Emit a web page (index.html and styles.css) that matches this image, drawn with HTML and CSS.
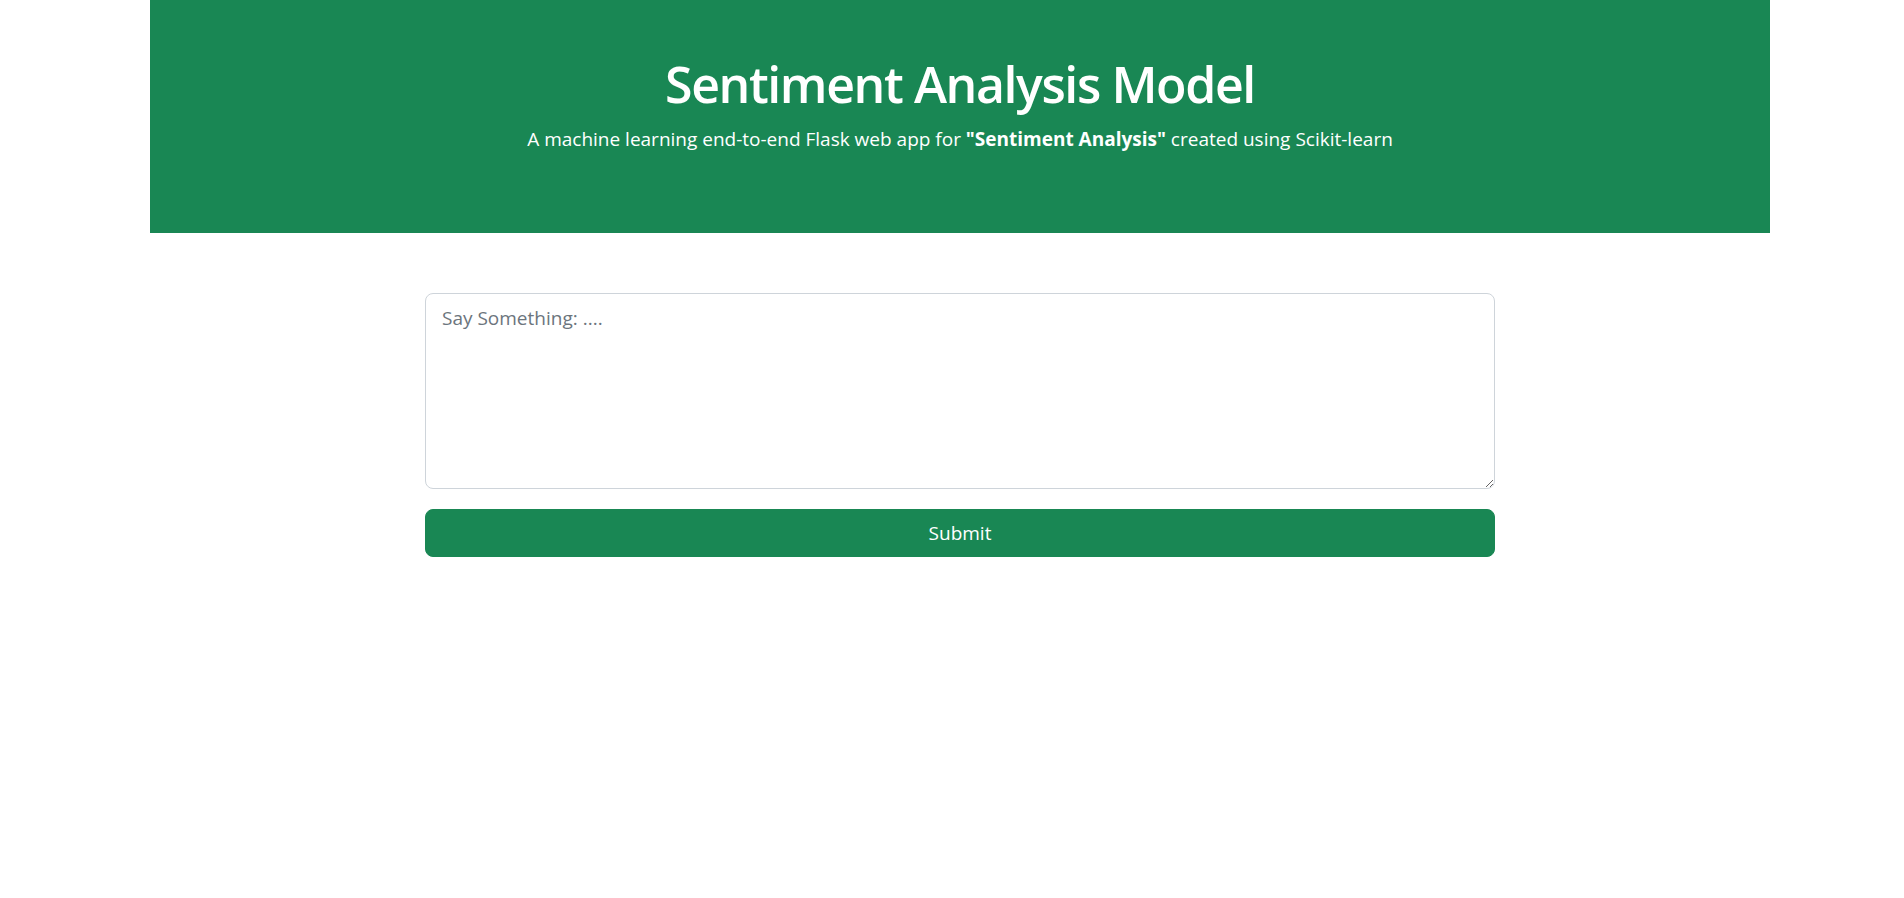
FILE: index.html
```html
<!DOCTYPE html>
<html lang="en">
<head>
  <meta charset="UTF-8">
  <meta name="viewport" content="width=device-width, initial-scale=1.0">
  <title>Sentiment Analysis</title>
  <link rel="stylesheet" href="styles.css">
</head>
<body>

<header class="hero">
  <h1 class="hero-title">Sentiment Analysis Model</h1>
  <p class="hero-lead">A machine learning end-to-end Flask web app for <b>"Sentiment Analysis"</b> created using Scikit-learn</p>
</header>

<section class="main">
  <form class="predict-form" action="/predict" method="post">
    <textarea class="form-input" name="message" placeholder="Say Something: ...."></textarea>
    <input class="btn-submit" type="submit" value="Submit">
  </form>
</section>

</body>
</html>
```

FILE: styles.css
```css
  body {
    font-family: "Open Sans", "Noto Sans", sans-serif;
    margin: 0;
    padding: 0 0 0 16px;
    color: #212529;
    background-color: #fff;
  }
  .hero {
    background-color: #198754;
    color: #fff;
    width: 1620px;
    height: 233px;
    margin: 0 auto;
    padding-top: 54px;
    box-sizing: border-box;
    text-align: center;
  }
  .hero-title {
    margin: 0;
    font-size: 50px;
    font-weight: 600;
    line-height: 1.2;
    letter-spacing: -1.4px;
  }
  .hero-lead {
    margin: 11px 0 0;
    font-size: 19px;
    line-height: 1.5;
  }
  .hero-lead b {
    font-weight: 700;
  }
  .main {
    padding-top: 60px;
  }
  .predict-form {
    width: 1070px;
    margin: 0 auto;
  }
  .form-input {
    display: block;
    width: 100%;
    height: 196px;
    box-sizing: border-box;
    padding: 10px 16px 8px;
    font-family: inherit;
    font-size: 19px;
    line-height: 1.5;
    color: #212529;
    border: 1px solid #ced4da;
    border-radius: 8px;
    resize: vertical;
  }
  .form-input::placeholder {
    color: #6c757d;
  }
  .btn-submit {
    display: block;
    width: 100%;
    height: 48px;
    margin-top: 20px;
    font-family: inherit;
    font-size: 19px;
    color: #fff;
    background-color: #198754;
    border: 1px solid #198754;
    border-radius: 8px;
    cursor: pointer;
  }
```
